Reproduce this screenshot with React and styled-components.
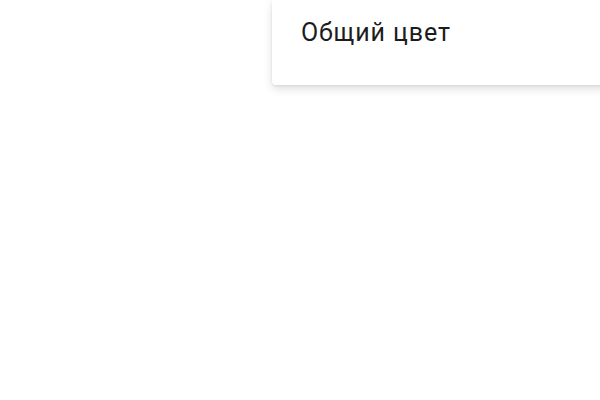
import React from "react";
import styled, { createGlobalStyle } from "styled-components";

const Global = createGlobalStyle`
  html, body { margin: 0; padding: 0; background: #ffffff; overflow: hidden; }
  body { font-family: Roboto, "Noto Sans", sans-serif; }
`;

const Page = styled.div`
  width: 600px;
  height: 400px;
  display: flex;
  padding-left: 272px;
  box-sizing: border-box;
  overflow: hidden;
`;

const Menu = styled.div`
  width: 360px;
  flex-shrink: 0;
  align-self: flex-start;
  background: #ffffff;
  border-radius: 0 0 4px 4px;
  box-shadow: 0 4px 10px rgba(0, 0, 0, 0.12), 0 1px 3px rgba(0, 0, 0, 0.08);
  padding: 8px 0 29px;
`;

const Item = styled.div`
  height: 48px;
  display: flex;
  align-items: center;
  padding: 0 29px;
  font-size: 25px;
  letter-spacing: 0.9px;
  color: #1c1c1c;
`;

export default function App() {
  return (
    <>
      <Global />
      <Page>
        <Menu>
          <Item>Общий цвет</Item>
        </Menu>
      </Page>
    </>
  );
}
